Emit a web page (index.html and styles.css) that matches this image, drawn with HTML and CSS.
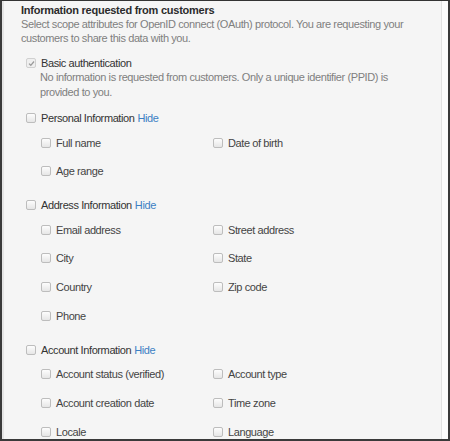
FILE: index.html
```html
<!DOCTYPE html>
<html>
<head>
<meta charset="utf-8">
<link rel="stylesheet" href="styles.css">
</head>
<body>
<div class="frame">
  <div class="panel">
    <div class="title">Information requested from customers</div>
    <div class="desc">Select scope attributes for OpenID connect (OAuth) protocol. You are requesting your customers to share this data with you.</div>

    <div class="basic">
      <div class="row">
        <span class="cb cb-checked"><svg width="7" height="7" viewBox="0 0 7 7"><path d="M1 3.6 L2.8 5.3 L6 1.5" fill="none" stroke="#9a9a9a" stroke-width="1.3"/></svg></span>
        <span class="label">Basic authentication</span>
      </div>
      <div class="basic-desc">No information is requested from customers. Only a unique identifier (PPID) is provided to you.</div>
    </div>

    <div class="group">
      <div class="row"><span class="cb"></span><span class="label">Personal Information</span><a class="hide">Hide</a></div>
      <div class="items">
        <div class="row"><span class="cb"></span><span class="item">Full name</span></div>
        <div class="row"><span class="cb"></span><span class="item">Date of birth</span></div>
        <div class="row"><span class="cb"></span><span class="item">Age range</span></div>
      </div>
    </div>

    <div class="group">
      <div class="row"><span class="cb"></span><span class="label">Address Information</span><a class="hide">Hide</a></div>
      <div class="items">
        <div class="row"><span class="cb"></span><span class="item">Email address</span></div>
        <div class="row"><span class="cb"></span><span class="item">Street address</span></div>
        <div class="row"><span class="cb"></span><span class="item">City</span></div>
        <div class="row"><span class="cb"></span><span class="item">State</span></div>
        <div class="row"><span class="cb"></span><span class="item">Country</span></div>
        <div class="row"><span class="cb"></span><span class="item">Zip code</span></div>
        <div class="row"><span class="cb"></span><span class="item">Phone</span></div>
      </div>
    </div>

    <div class="group">
      <div class="row"><span class="cb"></span><span class="label">Account Information</span><a class="hide">Hide</a></div>
      <div class="items">
        <div class="row"><span class="cb"></span><span class="item">Account status (verified)</span></div>
        <div class="row"><span class="cb"></span><span class="item">Account type</span></div>
        <div class="row"><span class="cb"></span><span class="item">Account creation date</span></div>
        <div class="row"><span class="cb"></span><span class="item">Time zone</span></div>
        <div class="row"><span class="cb"></span><span class="item">Locale</span></div>
        <div class="row"><span class="cb"></span><span class="item">Language</span></div>
      </div>
    </div>
  </div>
  <div class="strip"></div>
</div>
</body>
</html>
```

FILE: styles.css
```css
html, body {
  margin: 0;
  padding: 0;
}
body {
  font-family: "Liberation Sans", Arial, sans-serif;
  font-size: 11px;
  letter-spacing: -0.4px;
  color: #333;
  background: #fff;
}
.frame {
  width: 450px;
  height: 441px;
  box-sizing: border-box;
  border-top: 1px solid #333;
  border-left: 2px solid #3a3a3a;
  border-right: 2px solid #3a3a3a;
  border-bottom: 2px solid #3a3a3a;
  display: flex;
  overflow: hidden;
}
.panel {
  flex: 1;
  background: #f5f5f5;
  border-left: 2px solid #e4e4e4;
  border-right: 1px solid #e2e2e2;
  padding: 3px 0 0 17px;
  overflow: hidden;
}
.strip {
  width: 6px;
  background: #fcfcfc;
}
.title {
  font-weight: bold;
  letter-spacing: -0.25px;
  line-height: 13px;
  color: #2b2b2b;
}
.desc {
  line-height: 14px;
  color: #7f7f7f;
  padding-right: 20px;
}
.basic {
  margin-top: 11px;
  padding-left: 5px;
}
.row {
  display: flex;
  align-items: center;
  height: 14px;
  line-height: 14px;
  white-space: nowrap;
}
.cb {
  width: 8px;
  height: 8px;
  border: 1px solid #bdbdbd;
  border-radius: 2px;
  background: linear-gradient(#fdfdfd, #e6e6e6);
  margin-right: 5px;
  flex: none;
  display: flex;
  align-items: center;
  justify-content: center;
}
.cb-checked {
  border-color: #d0d0d0;
  background: #efefef;
}
.label {
  color: #333;
}
.basic-desc {
  padding-left: 14px;
  line-height: 14.5px;
  color: #808080;
  padding-right: 20px;
}
.group {
  padding-left: 5px;
  margin-top: 12px;
}
.group + .group {
  margin-top: 20px;
}
.hide {
  color: #3c7fc4;
  margin-left: 3px;
}
.items {
  display: grid;
  grid-template-columns: 172px auto;
  row-gap: 14.7px;
  margin-top: 10.5px;
  padding-left: 15px;
}
.item {
  color: #444;
}
```
